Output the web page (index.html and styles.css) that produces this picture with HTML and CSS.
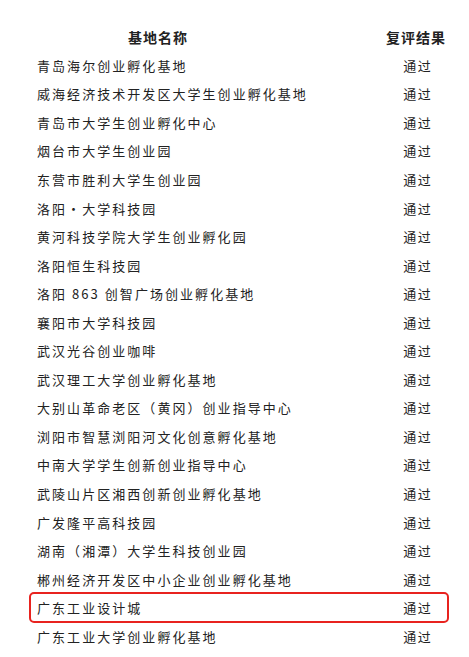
FILE: index.html
```html
<!DOCTYPE html>
<html lang="zh">
<head>
<meta charset="utf-8">
<title>复评结果</title>
<link rel="stylesheet" href="styles.css">
</head>
<body>
<div class="sheet">
  <div class="row head">
    <div class="name">基地名称</div>
    <div class="result">复评结果</div>
  </div>
  <div class="row"><div class="name">青岛海尔创业孵化基地</div><div class="result">通过</div></div>
  <div class="row"><div class="name">威海经济技术开发区大学生创业孵化基地</div><div class="result">通过</div></div>
  <div class="row"><div class="name">青岛市大学生创业孵化中心</div><div class="result">通过</div></div>
  <div class="row"><div class="name">烟台市大学生创业园</div><div class="result">通过</div></div>
  <div class="row"><div class="name">东营市胜利大学生创业园</div><div class="result">通过</div></div>
  <div class="row"><div class="name">洛阳・大学科技园</div><div class="result">通过</div></div>
  <div class="row"><div class="name">黄河科技学院大学生创业孵化园</div><div class="result">通过</div></div>
  <div class="row"><div class="name">洛阳恒生科技园</div><div class="result">通过</div></div>
  <div class="row"><div class="name">洛阳 863 创智广场创业孵化基地</div><div class="result">通过</div></div>
  <div class="row"><div class="name">襄阳市大学科技园</div><div class="result">通过</div></div>
  <div class="row"><div class="name">武汉光谷创业咖啡</div><div class="result">通过</div></div>
  <div class="row"><div class="name">武汉理工大学创业孵化基地</div><div class="result">通过</div></div>
  <div class="row"><div class="name">大别山革命老区（黄冈）创业指导中心</div><div class="result">通过</div></div>
  <div class="row"><div class="name">浏阳市智慧浏阳河文化创意孵化基地</div><div class="result">通过</div></div>
  <div class="row"><div class="name">中南大学学生创新创业指导中心</div><div class="result">通过</div></div>
  <div class="row"><div class="name">武陵山片区湘西创新创业孵化基地</div><div class="result">通过</div></div>
  <div class="row"><div class="name">广发隆平高科技园</div><div class="result">通过</div></div>
  <div class="row"><div class="name">湖南（湘潭）大学生科技创业园</div><div class="result">通过</div></div>
  <div class="row"><div class="name">郴州经济开发区中小企业创业孵化基地</div><div class="result">通过</div></div>
  <div class="row marked"><div class="name">广东工业设计城</div><div class="result">通过</div></div>
  <div class="row"><div class="name">广东工业大学创业孵化基地</div><div class="result">通过</div></div>
</div>
</body>
</html>
```

FILE: styles.css
```css
html, body {
  margin: 0;
  padding: 0;
  background: #ffffff;
}

body {
  width: 469px;
  height: 657px;
  overflow: hidden;
  font-family: "Noto Sans CJK SC", "Noto Sans", sans-serif;
  color: #222222;
}

.sheet {
  margin-left: 30px;
  width: 418px;
  padding-top: 22.5px;
}

.row {
  display: grid;
  grid-template-columns: 1fr 62px;
  align-items: center;
  height: 28.55px;
  padding-left: 7px;
  box-sizing: border-box;
}

.name {
  font-size: 13px;
  letter-spacing: 2.05px;
  white-space: nowrap;
}

.result {
  font-size: 13px;
  letter-spacing: 1.5px;
  text-align: center;
  white-space: nowrap;
  padding-left: 1.5px;
}

.head .name {
  font-size: 14px;
  font-weight: 700;
  letter-spacing: 1px;
  padding-left: 91px;
}

.head .result {
  font-size: 14px;
  font-weight: 700;
  letter-spacing: 1px;
  padding-left: 0;
  text-align: left;
}

.marked {
  outline: 2.5px solid #e8231f;
  outline-offset: -1px;
  border-radius: 4px;
}
```
